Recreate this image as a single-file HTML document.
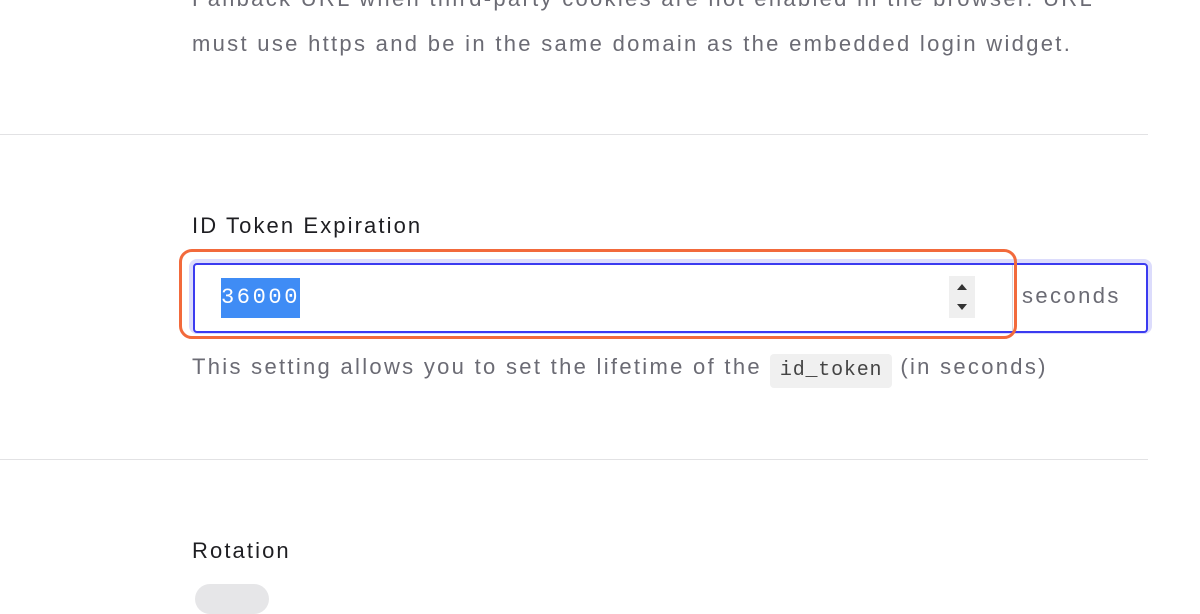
<!DOCTYPE html>
<html><head><style>
body{margin:0;width:1200px;height:594px;background:#fff;position:relative;overflow:hidden;font-family:"Liberation Sans",sans-serif}
.t{position:absolute;left:192px;white-space:nowrap}
.desc{color:#6b6b74;font-size:22px;letter-spacing:2.3px}
.hr{position:absolute;left:0;width:1148px;height:1px;background:#e2e2e4}
.lbl{color:#1e1e22;font-size:22px;letter-spacing:2.1px}
</style></head><body>
<div class="t desc" style="top:-14px">Fallback URL when third-party cookies are not enabled in the browser. URL</div>
<div class="t desc" style="top:31px">must use https and be in the same domain as the embedded login widget.</div>
<div class="hr" style="top:134px"></div>
<div class="t lbl" style="top:213px">ID Token Expiration</div>
<div style="position:absolute;left:189px;top:259px;width:963px;height:75px;border-radius:8px;background:#dcdcfc"></div>
<div style="position:absolute;left:193px;top:263px;width:951px;height:66px;border:2px solid #3b3bf0;border-radius:4px;background:#fff"></div>
<div style="position:absolute;left:1012px;top:265px;width:1px;height:66px;background:#d8d8e0"></div>
<div style="position:absolute;left:221px;top:278px;width:79px;height:40px;background:#3f8cf5"></div>
<div class="t" style="left:221px;top:285px;font-family:'Liberation Mono',monospace;font-size:22px;letter-spacing:2.6px;color:#fff">36000</div>
<div style="position:absolute;left:949px;top:276px;width:26px;height:42px;background:#efefef"></div>
<svg style="position:absolute;left:949px;top:276px" width="26" height="42"><path d="M8 14 L13 8 L18 14Z M8 28 L13 34 L18 28Z" fill="#333"/></svg>
<div class="t" style="left:1022px;top:283px;color:#6b6b74;font-size:22px;letter-spacing:2.4px">seconds</div>
<div style="position:absolute;left:179px;top:249px;width:832px;height:84px;border:3px solid #f26a3c;border-radius:13px"></div>
<div class="t desc" style="top:354px">This setting allows you to set the lifetime of the<span style="display:inline-block;background:#f0f0f0;border-radius:4px;padding:0 10px;font-family:'Liberation Mono',monospace;font-size:20px;letter-spacing:0.8px;color:#444;line-height:34px;margin:0 8px 0 8px;vertical-align:-1px">id_token</span>(in seconds)</div>
<div class="hr" style="top:459px"></div>
<div class="t lbl" style="top:538px">Rotation</div>
<div style="position:absolute;left:195px;top:584px;width:74px;height:30px;border-radius:15px;background:#e6e6e8"></div>
</body></html>
